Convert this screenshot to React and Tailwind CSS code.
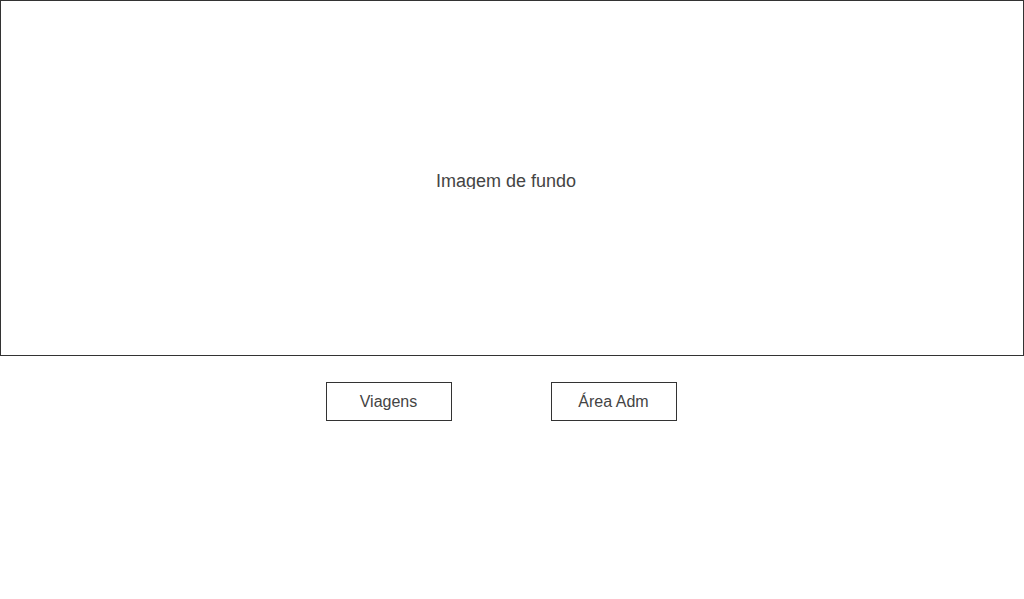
import React from 'react';

const App = () => {
    return (
        <div className="min-h-screen bg-white font-['Liberation_Sans',Arial,sans-serif] text-[#444444]">
            <div className="h-[356px] border border-[#333333] flex items-center justify-center pr-[12px]">
                <div className="mt-[4px] h-[17px] overflow-hidden text-[18px] leading-[18px]">Imagem de fundo</div>
            </div>
            <div className="mt-[26px] flex justify-center gap-[99px] pr-[22px]">
                <button className="w-[126px] h-[39px] border border-[#333333] text-[16px] text-[#444444] bg-white">Viagens</button>
                <button className="w-[126px] h-[39px] border border-[#333333] text-[16px] text-[#444444] bg-white">Área Adm</button>
            </div>
        </div>
    );
};

export default App;
